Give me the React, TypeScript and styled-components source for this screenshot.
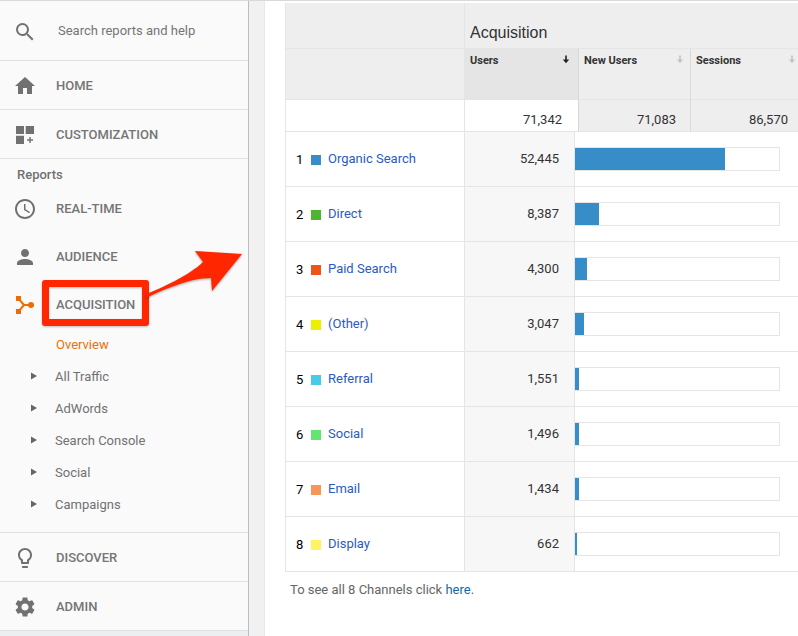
import React from "react";
import styled, { createGlobalStyle } from "styled-components";
import {
  MdSearch,
  MdHome,
  MdPerson,
  MdAccessTime,
  MdLightbulbOutline,
  MdSettings,
} from "react-icons/md";

const GlobalStyle = createGlobalStyle`
  *, *::before, *::after { box-sizing: border-box; }
  html, body { margin: 0; }
  body {
    background: #fff;
    font-family: Roboto, "Liberation Sans", sans-serif;
    font-size: 13px;
    color: #333;
    overflow: hidden;
  }
  button, input { font: inherit; color: inherit; }
`;

const Page = styled.div`
  display: flex;
  min-height: 100vh;
  border-top: 1px solid #d9d9d9;
`;

const Sidebar = styled.nav`
  flex: 0 0 249px;
  background: #eceff1;
  border-right: 1px solid #bdbdbd;
  color: #717171;
`;

const Menu = styled.div`
  background: #fafafa;
`;

const Gutter = styled.div`
  flex: 0 0 16px;
  background: #f1f1f1;
  border-right: 1px solid #e8e8e8;
`;

const IconSlot = styled.span`
  display: flex;
  justify-content: center;
  flex: 0 0 24px;
  padding-top: 2px;
  color: #717171;
`;

const SearchBar = styled.label`
  display: flex;
  align-items: center;
  gap: 21px;
  height: 60px;
  padding-left: 13px;
  border-bottom: 1px solid #e0e0e0;
`;

const SearchInput = styled.input`
  flex: 1;
  min-width: 0;
  padding: 0;
  border: 0;
  outline: 0;
  background: transparent;

  &::placeholder {
    color: #757575;
    opacity: 1;
  }
`;

const NavItem = styled.a<{ $divided?: boolean }>`
  position: relative;
  display: flex;
  align-items: center;
  gap: 19px;
  height: ${(p) => (p.$divided ? 49 : 48)}px;
  padding-left: 13px;
  border-bottom: ${(p) => (p.$divided ? "1px solid #e0e0e0" : "0")};
  color: #757575;
  font-weight: 500;
  text-decoration: none;
`;

const SectionTitle = styled.h2`
  margin: 0;
  padding: 8px 0 1px 17px;
  font-size: 13px;
  line-height: 16px;
  font-weight: 500;
`;

const SubMenu = styled.div`
  padding-bottom: 12px;
  border-bottom: 1px solid #e0e0e0;
`;

const SubLink = styled.a`
  display: flex;
  align-items: center;
  height: 32px;
  padding-left: 56px;
  color: #e8710a;
  text-decoration: none;
`;

const SubToggle = styled.button`
  display: flex;
  align-items: center;
  gap: 18px;
  width: 100%;
  height: 32px;
  padding: 0 0 0 31px;
  border: 0;
  background: transparent;
  text-align: left;
`;

const HighlightBox = styled.span`
  position: absolute;
  left: 42px;
  top: 0;
  width: 107px;
  height: 46px;
  border: 7px solid #ff2600;
  border-radius: 3px;
  filter: drop-shadow(0 1px 1px rgba(0, 0, 0, 0.25));
`;

const HighlightArrow = styled.svg`
  position: absolute;
  left: 140px;
  top: -36px;
  filter: drop-shadow(0 1px 1px rgba(0, 0, 0, 0.35));
`;

const Main = styled.main`
  flex: 1;
  min-width: 0;
  padding: 2px 0 0 20px;
  overflow: hidden;
`;

const DataTable = styled.table`
  width: calc(100% + 5px);
  table-layout: fixed;
  border-collapse: separate;
  border-spacing: 0;
  border-left: 1px solid #e5e5e5;
`;

const Col = styled.col<{ $w?: number }>`
  width: ${(p) => (p.$w ? p.$w + "px" : "auto")};
`;

const GroupHead = styled.th`
  height: 46px;
  padding: 14px 5px 0;
  border-bottom: 1px solid #e5e5e5;
  background: #eee;
  font-family: "Liberation Sans", Arial, sans-serif;
  font-size: 16px;
  line-height: 20px;
  font-weight: 400;
  text-align: left;
`;

const MetricHead = styled.th<{ $sorted?: boolean }>`
  height: 51px;
  padding: 0;
  vertical-align: top;
  background: ${(p) => (p.$sorted ? "#e5e5e5" : "#eee")};
  border-right: 1px solid #d8d8d8;
  border-bottom: 1px solid #e5e5e5;
`;

const SortButton = styled.button<{ $sorted?: boolean }>`
  display: flex;
  justify-content: space-between;
  width: 100%;
  padding: 5px ${(p) => (p.$sorted ? 8 : 6)}px 0 5px;
  border: 0;
  background: transparent;
  font-size: 11px;
  line-height: 14px;
  font-weight: 700;

  svg {
    margin-top: 1px;
    color: ${(p) => (p.$sorted ? "#222" : "#c4c4c4")};
  }
`;

const TotalCell = styled.td<{ $sorted?: boolean }>`
  height: 32px;
  padding: 8px ${(p) => (p.$sorted ? 16 : 14)}px 0 0;
  background: ${(p) => (p.$sorted ? "#fff" : "#eee")};
  border-right: 1px solid #d8d8d8;
  border-bottom: 1px solid #e5e5e5;
  text-align: right;
  line-height: 16px;
`;

const BlankCell = styled.td<{ $head?: boolean }>`
  background: ${(p) => (p.$head ? "#eee" : "#fff")};
  border-right: 1px solid #e5e5e5;
  border-bottom: 1px solid #e5e5e5;
`;

const ChannelCell = styled.th`
  height: 55px;
  padding: 0 0 0 10px;
  border-right: 1px solid #e5e5e5;
  border-bottom: 1px solid #e5e5e5;
  font-weight: 400;
`;

const Channel = styled.div`
  display: flex;
  align-items: center;
  line-height: 16px;
`;

const Rank = styled.span`
  flex: 0 0 15px;
  padding-top: 1px;
  color: #000;
  text-align: left;
`;

const Swatch = styled.span<{ $color: string }>`
  width: 10px;
  height: 10px;
  margin: 2px 7px 0 0;
  background: ${(p) => p.$color};
`;

const ChannelLink = styled.a`
  color: #2a5bc0;
  text-decoration: none;
`;

const UsersCell = styled.td`
  padding: 0 15px 2px 0;
  background: #f7f7f7;
  border-right: 1px solid #e5e5e5;
  border-bottom: 1px solid #e5e5e5;
  text-align: right;
`;

const BarCell = styled.td`
  padding: 0 23px 0 0;
  border-bottom: 1px solid #e5e5e5;
`;

const Track = styled.div`
  height: 24px;
  border: 1px solid #e5e5e5;
  border-left: 0;
`;

const Fill = styled.div`
  height: 22px;
  min-width: 2px;
  background: #368dc8;
`;

const Footnote = styled.p`
  margin: 0;
  padding: 10px 5px;
  color: #666;
  line-height: 16px;

  a {
    color: #15699f;
    text-decoration: none;
  }
`;

const TOTAL_USERS = 71342;

const channels = [
  { name: "Organic Search", users: 52445, color: "#368dc8" },
  { name: "Direct", users: 8387, color: "#50b432" },
  { name: "Paid Search", users: 4300, color: "#ed561b" },
  { name: "(Other)", users: 3047, color: "#edef00" },
  { name: "Referral", users: 1551, color: "#49cbe6" },
  { name: "Social", users: 1496, color: "#64e572" },
  { name: "Email", users: 1434, color: "#f79658" },
  { name: "Display", users: 662, color: "#fff263" },
];

const metrics = [
  { name: "Users", total: "71,342", sorted: true },
  { name: "New Users", total: "71,083", sorted: false },
  { name: "Sessions", total: "86,570", sorted: false },
];

const subSections = ["All Traffic", "AdWords", "Search Console", "Social", "Campaigns"];

const CustomizationIcon = () => (
  <svg width="24" height="24" viewBox="0 0 24 24" fill="currentColor" aria-hidden="true">
    <path d="M3 3h8v8H3zM12.700 3h8.300v8h-8.300zM3 12.700h8V21H3z" />
    <path d="M16.300 14h1.400v2.300H20v1.400h-2.300V20h-1.400v-2.300H14v-1.400h2.300z" />
  </svg>
);

const AcquisitionIcon = () => (
  <svg width="24" height="24" viewBox="0 0 24 24" aria-hidden="true">
    <path d="M5.500 5.500L11 12L5.500 18.500M11 12H18" fill="none" stroke="#ef6c00" strokeWidth="2" />
    <path d="M3 3h5v5H3zM3 16h5v5H3z" fill="#ef6c00" />
    <circle cx="18" cy="12" r="3" fill="#ef6c00" />
  </svg>
);

const Triangle = () => (
  <svg width="6" height="8" viewBox="0 0 6 8" fill="#666" aria-hidden="true">
    <path d="M0 0.500L6 4L0 7.500z" />
  </svg>
);

const SortArrow = () => (
  <svg width="8" height="9" viewBox="0 0 8 9" fill="currentColor" aria-hidden="true">
    <path d="M3.200 0.500h1.600v4h2.400L4 8.200L0.800 4.500h2.400z" />
  </svg>
);

export default function App() {
  return (
    <>
      <GlobalStyle />
      <Page>
        <Sidebar>
          <Menu>
            <SearchBar>
              <IconSlot><MdSearch size={24} /></IconSlot>
              <SearchInput
                type="text"
                aria-label="Search reports and help"
                placeholder="Search reports and help"
              />
            </SearchBar>
            <NavItem href="#home" $divided>
              <IconSlot><MdHome size={24} /></IconSlot>HOME
            </NavItem>
            <NavItem href="#customization" $divided>
              <IconSlot><CustomizationIcon /></IconSlot>CUSTOMIZATION
            </NavItem>
            <SectionTitle>Reports</SectionTitle>
            <NavItem href="#real-time">
              <IconSlot><MdAccessTime size={24} /></IconSlot>REAL-TIME
            </NavItem>
            <NavItem href="#audience">
              <IconSlot><MdPerson size={24} /></IconSlot>AUDIENCE
            </NavItem>
            <NavItem href="#acquisition">
              <IconSlot><AcquisitionIcon /></IconSlot>ACQUISITION
              <HighlightBox />
              <HighlightArrow width="110" height="60" viewBox="140 244 110 60" aria-hidden="true">
                <path
                  d="M146 294C160 289 190 275 203 262L195 251L242 254L212 291L211 278C190 278 165 289 146 298z"
                  fill="#ff2600"
                />
              </HighlightArrow>
            </NavItem>
            <SubMenu>
              <SubLink href="#overview">Overview</SubLink>
              {subSections.map((name) => (
                <SubToggle key={name} type="button" aria-expanded={false}>
                  <Triangle />
                  {name}
                </SubToggle>
              ))}
            </SubMenu>
            <NavItem href="#discover" $divided>
              <IconSlot><MdLightbulbOutline size={24} /></IconSlot>DISCOVER
            </NavItem>
            <NavItem href="#admin" $divided>
              <IconSlot><MdSettings size={24} /></IconSlot>ADMIN
            </NavItem>
          </Menu>
        </Sidebar>
        <Gutter />
        <Main>
          <DataTable>
            <colgroup>
              <Col $w={179} />
              <Col $w={110} />
              <Col $w={4} />
              <Col $w={112} />
              <Col />
            </colgroup>
            <thead>
              <tr>
                <BlankCell $head />
                <GroupHead colSpan={4}>Acquisition</GroupHead>
              </tr>
              <tr>
                <BlankCell $head />
                {metrics.map((m) => (
                  <MetricHead key={m.name} $sorted={m.sorted} colSpan={m.sorted ? 2 : 1}>
                    <SortButton type="button" $sorted={m.sorted}>
                      {m.name}
                      <SortArrow />
                    </SortButton>
                  </MetricHead>
                ))}
              </tr>
            </thead>
            <tbody>
              <tr>
                <BlankCell />
                {metrics.map((m) => (
                  <TotalCell key={m.name} $sorted={m.sorted} colSpan={m.sorted ? 2 : 1}>
                    {m.total}
                  </TotalCell>
                ))}
              </tr>
              {channels.map((c, i) => (
                <tr key={c.name}>
                  <ChannelCell scope="row">
                    <Channel>
                      <Rank>{i + 1}</Rank>
                      <Swatch $color={c.color} />
                      <ChannelLink href="#channel">{c.name}</ChannelLink>
                    </Channel>
                  </ChannelCell>
                  <UsersCell>{c.users.toLocaleString("en-US")}</UsersCell>
                  <BarCell colSpan={3}>
                    <Track>
                      <Fill style={{ width: `${(c.users / TOTAL_USERS) * 100}%` }} />
                    </Track>
                  </BarCell>
                </tr>
              ))}
            </tbody>
          </DataTable>
          <Footnote>
            To see all 8 Channels click <a href="#channels">here.</a>
          </Footnote>
        </Main>
      </Page>
    </>
  );
}
